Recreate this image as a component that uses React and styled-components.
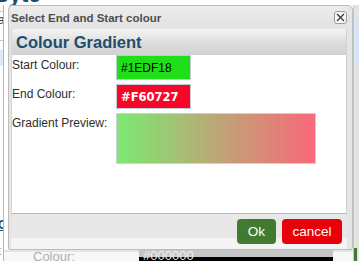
import React from "react"
import styled, { createGlobalStyle } from "styled-components"

const GlobalStyle = createGlobalStyle`
  html, body {
    margin: 0;
    padding: 0;
    background: #fff;
    font-family: "Liberation Sans", Arial, sans-serif;
  }
`

const Screen = styled.div`
  position: relative;
  width: 359px;
  height: 261px;
  overflow: hidden;
  background: #fff;
`

/* ---- page behind the dialog ---- */

const Page = styled.div`
  display: flex;
  flex-direction: column;
  height: 100%;
`

const PageTitle = styled.h1`
  margin: -15px 0 0 -7px;
  height: 20px;
  font-size: 22px;
  line-height: 20px;
  font-weight: bold;
  color: #1d4e6b;
`

const PageBody = styled.div`
  flex: 1;
  display: grid;
  grid-template-columns: 4px 1fr 6px;
`

const LeftRail = styled.div`
  display: flex;
  flex-direction: column;
  border-right: 1px solid #b4b4b4;
  font-size: 12px;
  color: #333;
  overflow: hidden;
`

const RailText = styled.span`
  margin: ${p => p.$mt || 0}px 0 0 -2px;
  line-height: 12px;
  color: ${p => p.$color || "#333"};
  text-decoration: ${p => (p.$underline ? "underline" : "none")};
  font-weight: ${p => (p.$bold ? "bold" : "normal")};
`

const RailDots = styled.div`
  margin-top: ${p => p.$mt}px;
  border-top: 1px dotted #aaa;
`

const RailBox = styled.div`
  height: 16px;
  margin-top: ${p => p.$mt}px;
  background: #dfe8f5;
`

const PageMain = styled.div`
  display: flex;
  flex-direction: column;
  justify-content: flex-end;
`

const PageRow = styled.div`
  display: flex;
  align-items: flex-start;
  height: 11px;
  padding-left: 29px;
  background: linear-gradient(#e4e4e4 0 2px, #f7f7f7 2px);
`

const PageLabel = styled.span`
  width: 106px;
  font-size: 13px;
  line-height: 14px;
  color: #b0b0b0;
`

const PageSwatch = styled.div`
  width: 190px;
  height: 11px;
  background: linear-gradient(#c6c6c6 0 7px, #000 7px);
  color: #eee;
  font-size: 13px;
  line-height: 12px;
  padding-left: 4px;
`

const RightRail = styled.div`
  display: flex;
  flex-direction: column;
  background: #e3e3e3;
  border-left: 1px solid #c9c9c9;
`

const RightBlue = styled.div`
  height: 46px;
  margin-top: 14px;
  background: #d7e4f6;
`

const RightGreen = styled.div`
  margin-top: auto;
  height: 13px;
  width: 3px;
  background: #3f7b2f;
`

/* ---- dialog ---- */

const Dialog = styled.div`
  position: absolute;
  left: 8px;
  top: 5px;
  width: 345px;
  box-sizing: border-box;
  display: flex;
  flex-direction: column;
  padding: 0 5px 0 2px;
  background: #e5e5e5;
  border: 1px solid #bdbdbd;
  border-radius: 4px 5px 2px 2px;
`

const TitleBar = styled.div`
  display: flex;
  align-items: center;
  justify-content: space-between;
  height: 23px;
  background: linear-gradient(#ececec, #e2e2e2);
`

const Title = styled.span`
  font-size: 11.5px;
  font-weight: bold;
  color: #4e4e4e;
`

const CloseButton = styled.button`
  display: flex;
  align-items: center;
  justify-content: center;
  width: 13px;
  height: 13px;
  padding: 0;
  border: 1px solid #9c9c9c;
  border-radius: 3px;
  background: #f7f7f7;
`

const Panel = styled.div`
  display: flex;
  flex-direction: column;
  background: #fff;
  border-left: 1px solid #d6d6d6;
  border-right: 1px solid #cfcfcf;
  border-bottom: 1px solid #98bfea;
`

const PanelHeader = styled.div`
  display: flex;
  align-items: center;
  height: 26px;
  padding-left: 4px;
  background: linear-gradient(#f3f3f3 0, #e8e8e8 30%, #dadada 60%, #d3d3d3 100%);
  font-size: 16.5px;
  font-weight: bold;
  color: #1d4e6b;
`

const FormGrid = styled.div`
  display: grid;
  grid-template-columns: 104px auto;
  grid-auto-rows: min-content;
  row-gap: 4px;
  height: 158px;
  align-content: start;
`

const Label = styled.span`
  padding-top: 3px;
  font-size: 12px;
  line-height: 14px;
  color: #2e2e2e;
`

const ColourInput = styled.div`
  width: 75px;
  height: 25px;
  box-sizing: border-box;
  display: flex;
  align-items: center;
  padding-left: 4px;
  border: 1px solid #c4c9d6;
  background: ${p => p.$bg};
  color: ${p => (p.$light ? "#fff" : "#000")};
  font-family: ${p => (p.$light ? `"DejaVu Sans", sans-serif` : `"Liberation Sans", Arial, sans-serif`)};
  font-size: ${p => (p.$light ? "11.5px" : "12px")};
  font-weight: ${p => (p.$light ? "bold" : "normal")};
`

const Preview = styled.div`
  display: flex;
  width: 200px;
  height: 51px;
  box-sizing: border-box;
  border: 1px solid #cfd0d8;
`

const Band = styled.div`
  flex: 1;
`

const ButtonPane = styled.div`
  display: flex;
  justify-content: flex-end;
  gap: 6px;
  height: 35px;
  box-sizing: border-box;
  padding: 5px 5px 0 0;
  background: linear-gradient(#e8e8e8 0 24px, #f4f4f4 24px);
`

const Button = styled.button`
  width: ${p => p.$w}px;
  height: 25px;
  padding: 0;
  border: none;
  border-radius: 4px;
  background: ${p => p.$bg};
  color: #fff;
  font-family: "Liberation Sans", Arial, sans-serif;
  font-size: 13.5px;
`

const mix = (a, b, t) => {
  const c = [0, 1, 2].map(i => Math.round(a[i] + (b[i] - a[i]) * t))
  return `rgb(${c.join(",")})`
}

const startTint = [128, 229, 114]
const endTint = [247, 107, 122]
const bands = Array.from({ length: 20 }, (_, i) => mix(startTint, endTint, i / 19))

export default function App() {
  return (
    <Screen>
      <GlobalStyle />
      <Page>
        <PageTitle>Byte</PageTitle>
        <PageBody>
          <LeftRail>
            <RailDots $mt={6} />
            <RailText $mt={2}>a</RailText>
            <RailDots $mt={14} />
            <RailBox $mt={9} />
            <RailText $mt={153} $color="#1d4e6b" $underline $bold>
              C
            </RailText>
            <RailText $mt={14} $color="#aaa">
              t
            </RailText>
          </LeftRail>
          <PageMain>
            <PageRow>
              <PageLabel>Colour:</PageLabel>
              <PageSwatch>#000000</PageSwatch>
            </PageRow>
          </PageMain>
          <RightRail>
            <RightBlue />
            <RightGreen />
          </RightRail>
        </PageBody>
      </Page>

      <Dialog>
        <TitleBar>
          <Title>Select End and Start colour</Title>
          <CloseButton aria-label="close">
            <svg width="9" height="9" viewBox="0 0 9 9">
              <path d="M1 1 L8 8 M8 1 L1 8" stroke="#333" strokeWidth="1.2" fill="none" />
            </svg>
          </CloseButton>
        </TitleBar>
        <Panel>
          <PanelHeader>Colour Gradient</PanelHeader>
          <FormGrid>
            <Label>Start Colour:</Label>
            <ColourInput $bg="#1EDF18">#1EDF18</ColourInput>
            <Label>End Colour:</Label>
            <ColourInput $bg="#F60727" $light>
              #F60727
            </ColourInput>
            <Label>Gradient Preview:</Label>
            <Preview>
              {bands.map((c, i) => (
                <Band key={i} style={{ background: c }} />
              ))}
            </Preview>
          </FormGrid>
        </Panel>
        <ButtonPane>
          <Button $w={39} $bg="#417b30">
            Ok
          </Button>
          <Button $w={60} $bg="#e8000b">
            cancel
          </Button>
        </ButtonPane>
      </Dialog>
    </Screen>
  )
}
